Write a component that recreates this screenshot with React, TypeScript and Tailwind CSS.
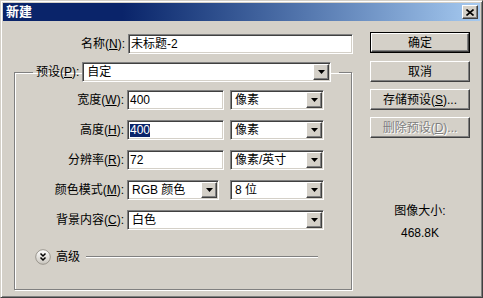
const sunken =
  'border border-t-[#808080] border-l-[#808080] border-b-white border-r-white shadow-[inset_1px_1px_0_#404040,inset_-1px_-1px_0_#d4d0c8]';
const raised =
  'border border-t-white border-l-white border-b-[#404040] border-r-[#404040] shadow-[inset_-1px_-1px_0_#808080,inset_1px_1px_0_#d4d0c8]';

function Label({ text, k, w = 'w-[112px]' }: { text: string; k: string; w?: string }) {
  return (
    <span className={`${w} shrink-0 text-right pr-[3px] whitespace-nowrap`}>
      {text}(<span className="underline">{k}</span>):
    </span>
  );
}

function TextBox({ value, w, selected }: { value: string; w: string; selected?: boolean }) {
  return (
    <div className={`${w} h-[20px] bg-white ${sunken} flex items-center pl-[2px]`}>
      {selected ? <span className="bg-[#0a246a] text-white leading-[13px]">{value}</span> : <span>{value}</span>}
    </div>
  );
}

function Combo({ value, w }: { value: string; w: string }) {
  return (
    <div className={`${w} h-[20px] bg-white ${sunken} flex items-center p-[1px]`}>
      <span className="flex-1 pl-[3px] whitespace-nowrap">{value}</span>
      <div className={`w-[16px] h-full bg-[#d4d0c8] ${raised} flex items-center justify-center`}>
        <svg width="7" height="4" viewBox="0 0 7 4">
          <path d="M0 0h7L3.5 4z" fill="#000" />
        </svg>
      </div>
    </div>
  );
}

function Button({ text, k, suffix = '', isDefault, disabled }: { text: string; k?: string; suffix?: string; isDefault?: boolean; disabled?: boolean }) {
  const body = (
    <div className={`h-full w-full bg-[#d4d0c8] ${raised} flex items-center justify-center`}>
      <span className={disabled ? 'text-[#808080] [text-shadow:1px_1px_0_#fff]' : ''}>
        {text}
        {k && (
          <>
            (<span className="underline">{k}</span>)
          </>
        )}
        {suffix}
      </span>
    </div>
  );
  return <div className={`w-[100px] h-[21px] ${isDefault ? 'border border-black' : ''}`}>{body}</div>;
}

function Row({ children }: { children: React.ReactNode }) {
  return <div className="flex items-center h-[20px]">{children}</div>;
}

export default function App() {
  return (
    <div className="w-[483px] h-[298px] bg-[#d4d0c8] border border-t-[#d4d0c8] border-l-[#d4d0c8] border-b-[#404040] border-r-[#404040] shadow-[inset_1px_1px_0_#fff,inset_-1px_-1px_0_#808080] p-[2px] text-[12px] text-black font-['Liberation_Sans','Noto_Sans_CJK_SC',sans-serif] overflow-hidden">
      <div className="h-[18px] bg-linear-to-r from-[#0a246a] from-25% to-[#a6caf0] flex items-center justify-between pl-[3px] pr-[2px]">
        <span className="text-white font-bold text-[13px]">新建</span>
        <div className={`w-[16px] h-[14px] bg-[#d4d0c8] ${raised} flex items-center justify-center`}>
          <svg width="8" height="7" viewBox="0 0 8 7">
            <path d="M0.5 0.5l7 6M7.5 0.5l-7 6" stroke="#000" strokeWidth="1.6" />
          </svg>
        </div>
      </div>

      <div className="flex">
        <div className="ml-[11px] mt-[13px] w-[340px]">
          <Row>
            <Label text="名称" k="N" w="w-[114px]" />
            <TextBox value="未标题-2" w="w-[225px]" />
          </Row>

          <fieldset className="mt-[8px] w-[338px] border border-[#808080] shadow-[1px_1px_0_#fff,inset_1px_1px_0_#fff] pb-[24px]">
            <legend className="ml-[18px] pr-[8px] flex items-center h-[20px]">
              <span className="pl-[3px] pr-[3px] whitespace-nowrap">
                预设(<span className="underline">P</span>):
              </span>
              <Combo value="自定" w="w-[249px]" />
            </legend>

            <div className="mt-[8px] flex flex-col gap-[10px]">
              <Row>
                <Label text="宽度" k="W" />
                <TextBox value="400" w="w-[97px]" />
                <div className="ml-[6px]">
                  <Combo value="像素" w="w-[94px]" />
                </div>
              </Row>
              <Row>
                <Label text="高度" k="H" />
                <TextBox value="400" w="w-[97px]" selected />
                <div className="ml-[6px]">
                  <Combo value="像素" w="w-[94px]" />
                </div>
              </Row>
              <Row>
                <Label text="分辨率" k="R" />
                <TextBox value="72" w="w-[97px]" />
                <div className="ml-[6px]">
                  <Combo value="像素/英寸" w="w-[94px]" />
                </div>
              </Row>
              <Row>
                <Label text="颜色模式" k="M" />
                <Combo value="RGB 颜色" w="w-[92px]" />
                <div className="ml-[11px]">
                  <Combo value="8 位" w="w-[94px]" />
                </div>
              </Row>
              <Row>
                <Label text="背景内容" k="C" />
                <Combo value="白色" w="w-[197px]" />
              </Row>
            </div>

            <div className="mt-[19px] flex items-center h-[16px] ml-[20px] mr-[33px]">
              <svg width="16" height="16" viewBox="0 0 16 16">
                <defs>
                  <linearGradient id="adv" x1="0" y1="0" x2="0" y2="1">
                    <stop offset="0" stopColor="#ffffff" />
                    <stop offset="1" stopColor="#c8c4bc" />
                  </linearGradient>
                </defs>
                <circle cx="8" cy="8" r="7.3" fill="url(#adv)" stroke="#9a968e" strokeWidth="1" />
                <path d="M5.5 4.5l2.5 2.5 2.5-2.5M5.5 8.5l2.5 2.5 2.5-2.5" fill="none" stroke="#000" strokeWidth="1.5" />
              </svg>
              <span className="ml-[5px] whitespace-nowrap">高级</span>
              <div className="ml-[6px] flex-1 h-[2px] border-t border-[#808080] border-b border-b-white" />
            </div>
          </fieldset>
        </div>

        <div className="ml-[16px] mt-[11px] flex flex-col items-center w-[100px]">
          <Button text="确定" isDefault />
          <div className="mt-[8px]">
            <Button text="取消" />
          </div>
          <div className="mt-[7px]">
            <Button text="存储预设" k="S" suffix="..." />
          </div>
          <div className="mt-[7px]">
            <Button text="删除预设" k="D" suffix="..." disabled />
          </div>
          <div className="mt-[66px] leading-[14px]">图像大小:</div>
          <div className="mt-[8px] leading-[14px]">468.8K</div>
        </div>
      </div>
    </div>
  );
}
